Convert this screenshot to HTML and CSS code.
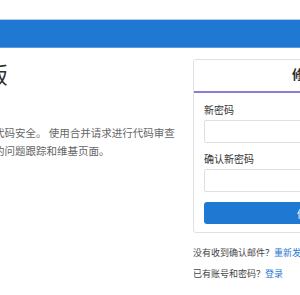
FILE: index.html
```html
<!DOCTYPE html>
<html lang="zh-CN">
<head>
  <meta charset="UTF-8" />
  <meta name="viewport" content="width=device-width, initial-scale=1.0"/>
  <title>修改密码</title>

  <link rel="stylesheet" href="styles.css">
</head>
<body>

  <!-- barra azul do topo -->
  <div class="flash-bar"></div>

  <div class="login-page">
    <!-- coluna da esquerda: descrição -->
    <div class="brand-info">
      <h3>GitLab 社区版</h3>
      <p class="lead">开源代码协作软件</p>
      <p>细粒度访问控制保护您的代码安全。 使用合并请求进行代码审查并加强协作，项目有自己的问题跟踪和维基页面。</p>
    </div>

    <!-- coluna da direita: formulário -->
    <div class="login-side">
      <div class="login-box">
        <div class="login-header">修改密码</div>
        <form class="login-body">
          <label for="new-password">新密码</label>
          <input id="new-password" type="password">
          <label for="confirm-password">确认新密码</label>
          <input id="confirm-password" type="password">
          <button type="submit" class="btn-save">修改密码</button>
        </form>
      </div>
      <p class="helper">没有收到确认邮件？<a href="#">重新发送</a></p>
      <p class="helper">已有账号和密码？<a href="#">登录</a></p>
    </div>
  </div>

</body>
</html>
```

FILE: styles.css
```css
* {
  margin: 0;
  padding: 0;
  box-sizing: border-box;
}
html,
body {
  overflow: hidden;
}
body {
  font-family: "Noto Sans CJK SC", "Noto Sans", sans-serif;
  background-color: #fff;
  color: #2e2e2e;
}

/* Barra azul */
.flash-bar {
  margin-top: 19px;
  height: 29px;
  background-color: #1f78d1;
  border-top: 1px solid #b3cbe6;
  border-bottom: 1px solid #5a9be0;
}

/* Layout das duas colunas (a página é mais larga que a janela) */
.login-page {
  display: flex;
  align-items: flex-start;
  gap: 14.5px;
  margin-left: -121.5px;
  padding-top: 11px;
}

.brand-info {
  width: 300px;
  flex-shrink: 0;
}
.brand-info h3 {
  font-size: 22px;
  line-height: 28px;
  font-weight: 400;
  letter-spacing: -1px;
  color: #2e2e2e;
  margin-bottom: 9px;
}
.brand-info p {
  font-size: 10.5px;
  line-height: 18px;
  color: #666;
}
.brand-info .lead {
  margin-bottom: 10.3px;
}

/* Caixa do formulário */
.login-side {
  width: 250px;
  flex-shrink: 0;
}
.login-box {
  border: 1px solid #e1e1e1;
  border-radius: 3px;
  background-color: #fff;
}
.login-header {
  font-size: 13px;
  line-height: 28px;
  font-weight: 600;
  text-align: center;
  padding-bottom: 3px;
  border-bottom: 2px solid #8a7fd4;
}
.login-body {
  display: flex;
  flex-direction: column;
  padding: 10px 10px 8px;
}
.login-body label {
  font-size: 10px;
  line-height: 14px;
  color: #333;
  margin-bottom: 3px;
}
.login-body input {
  height: 23px;
  border: 1px solid #dfdfdf;
  border-radius: 2px;
  background-color: #fff;
  margin-bottom: 9px;
}
.btn-save {
  margin-top: 1px;
  height: 22px;
  border: none;
  border-radius: 3px;
  background-color: #1f78d1;
  color: #fff;
  font-family: inherit;
  font-size: 10.5px;
}

/* Links de ajuda abaixo da caixa */
.helper {
  font-size: 9px;
  line-height: 21px;
  color: #444;
}
.helper:first-of-type {
  margin-top: 8.5px;
}
.helper a {
  color: #1f78d1;
  text-decoration: none;
}
```
